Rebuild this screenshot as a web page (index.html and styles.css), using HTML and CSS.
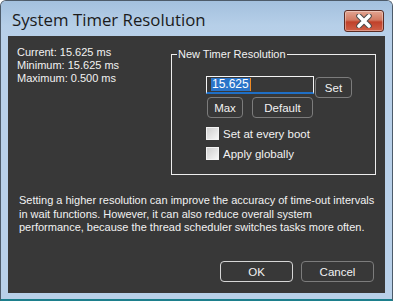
FILE: index.html
```html
<!DOCTYPE html>
<html>
<head>
<meta charset="utf-8">
<link rel="stylesheet" href="styles.css">
</head>
<body>
<div class="window">
  <div class="titlebar">
    <div class="title">System Timer Resolution</div>
    <div class="close">
      <svg width="22" height="14" viewBox="0 0 22 14">
        <path d="M6 2 L16 12 M16 2 L6 12" stroke="#4a4a4a" stroke-width="5.5" stroke-linecap="round" fill="none"/>
        <path d="M6 2 L16 12 M16 2 L6 12" stroke="#ffffff" stroke-width="3.6" stroke-linecap="round" fill="none"/>
      </svg>
    </div>
  </div>
  <div class="client">
    <div class="top">
      <div class="info">
        <div>Current: 15.625 ms</div>
        <div>Minimum: 15.625 ms</div>
        <div>Maximum: 0.500 ms</div>
      </div>
      <fieldset class="group">
        <legend>New Timer Resolution</legend>
        <div class="group-body">
          <div class="row1">
            <div class="input"><span class="sel">15.625</span><span class="caret"></span></div>
            <div class="btn btn-set">Set</div>
          </div>
          <div class="row2">
            <div class="btn btn-max">Max</div>
            <div class="btn btn-default">Default</div>
          </div>
          <div class="check"><span class="box"></span><span>Set at every boot</span></div>
          <div class="check"><span class="box"></span><span>Apply globally</span></div>
        </div>
      </fieldset>
    </div>
    <p class="desc">Setting a higher resolution can improve the accuracy of time-out intervals in wait functions. However, it can also reduce overall system performance, because the thread scheduler switches tasks more often.</p>
    <div class="footer">
      <div class="btn btn-ok">OK</div>
      <div class="btn btn-cancel">Cancel</div>
    </div>
  </div>
</div>
</body>
</html>
```
FILE: styles.css
```css
* { box-sizing: border-box; }
html, body { margin: 0; padding: 0; background: #ffffff; }
body { width: 393px; height: 301px; overflow: hidden; }

.window {
  width: 393px;
  height: 301px;
  border: 1px solid #4d5b6a;
  border-bottom: 2px solid #1d7f8c;
  border-radius: 6px 6px 0 0;
  background: #b8d0e9;
  display: flex;
  flex-direction: column;
  font-family: "Liberation Sans", Arial, sans-serif;
}

.titlebar {
  height: 35px;
  display: flex;
  align-items: flex-start;
  justify-content: space-between;
  padding: 0 8px 0 11px;
  background: linear-gradient(#a3c0de, #b6cfe8 70%, #b8d0e9);
  border-radius: 5px 5px 0 0;
}

.title {
  font-family: "Open Sans", sans-serif;
  font-size: 16.8px;
  color: #1b1b1b;
  margin-top: 7px;
  line-height: 24px;
}

.close {
  width: 40px;
  height: 22px;
  margin-top: 9px;
  border: 1px solid #5b2c24;
  border-radius: 3px;
  background: linear-gradient(#e2a592 0%, #d27a62 45%, #c0412a 55%, #cf6048 100%);
  box-shadow: inset 0 0 0 1px rgba(255,255,255,0.35);
  display: flex;
  align-items: center;
  justify-content: center;
}

.client {
  margin: 0 7px;
  height: 257px;
  background: #383838;
  color: #f2f2f2;
  font-size: 11px;
  display: flex;
  flex-direction: column;
  padding: 10px 9px 11px 9px;
}

.top {
  display: flex;
  justify-content: space-between;
  align-items: flex-start;
}

.info { line-height: 13px; }

.group {
  margin: 2px 0 0 0;
  width: 205px;
  height: 127px;
  border: 1px solid #ededed;
  padding: 0;
  min-width: 0;
}

.group legend {
  padding: 0 1px;
  margin-left: 5px;
  line-height: 13px;
  color: #f2f2f2;
}

.group-body { padding-left: 34px; }

.row1 {
  display: flex;
  align-items: flex-start;
  margin-top: 15px;
}

.input {
  width: 108px;
  height: 18px;
  border: 1px solid #f4f4f4;
  border-bottom: 2px solid #1f6fc6;
  background: #383838;
  display: flex;
  align-items: center;
  padding-left: 4px;
}

.sel {
  background: #2a74c9;
  color: #ffffff;
  line-height: 13px;
  padding: 0 1px;
  font-size: 12px;
}

.caret {
  width: 1px;
  height: 13px;
  background: #f08a24;
}

.btn {
  height: 21px;
  border: 1px solid #7c7c7c;
  border-radius: 4px;
  display: flex;
  align-items: center;
  justify-content: center;
  color: #f2f2f2;
  font-size: 11.5px;
}

.btn-set { width: 37px; margin: 1px 0 0 1px; }

.row2 {
  display: flex;
  margin-top: -1px;
  gap: 9px;
  padding-left: 1px;
}

.btn-max { width: 36px; }
.btn-default { width: 61px; }

.check {
  display: flex;
  align-items: center;
  gap: 4px;
  height: 13px;
  margin-top: 7px;
  font-size: 11.5px;
}
.row2 + .check { margin-top: 9px; }

.box {
  width: 13px;
  height: 13px;
  border: 1px solid #f4f4f4;
  background: linear-gradient(135deg, #cfcfcf, #f7f7f7);
  flex: none;
}

.desc {
  margin: 19px 0 0 2px;
  line-height: 13.6px;
  font-size: 11px;
}

.footer {
  margin-top: auto;
  display: flex;
  justify-content: flex-end;
  gap: 8px;
  padding-right: 2px;
}

.btn-ok, .btn-cancel { width: 73px; }
.btn-ok { border-color: #d6d6d6; }
```
